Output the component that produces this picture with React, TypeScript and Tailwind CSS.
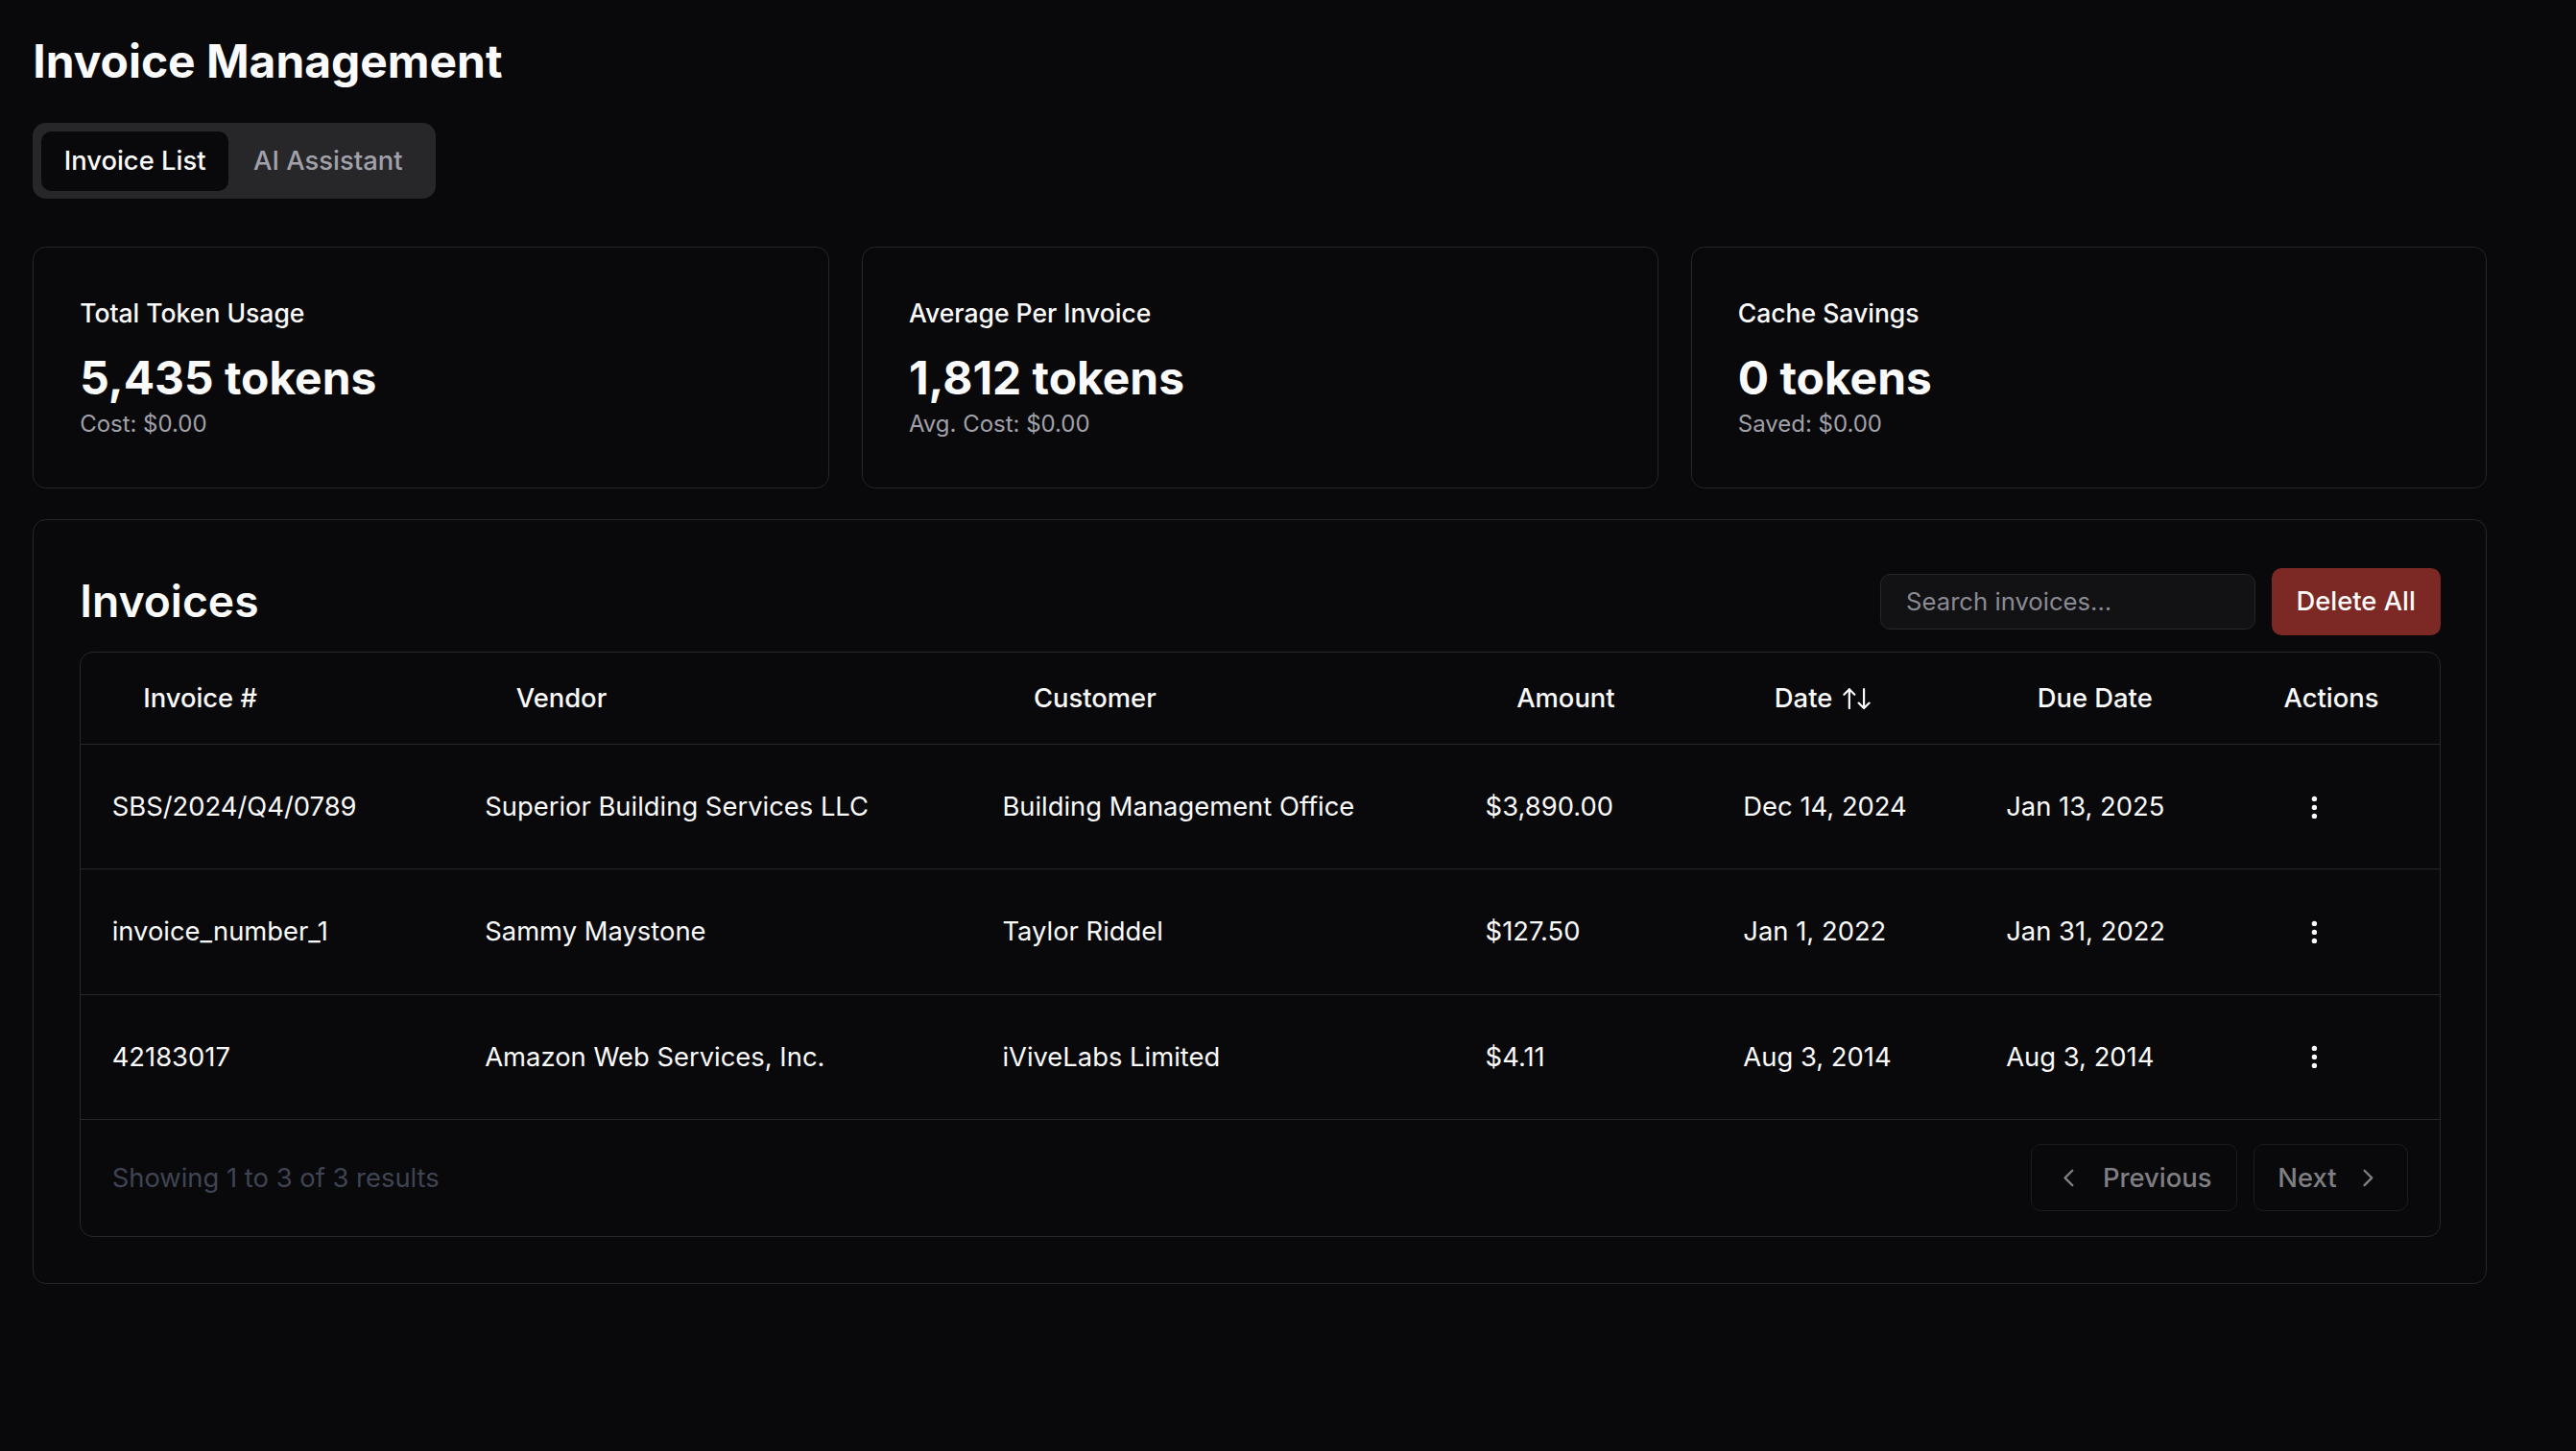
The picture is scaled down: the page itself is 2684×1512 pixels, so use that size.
import { ChevronLeft, ChevronRight, MoreVertical } from "lucide-react";

const rows = [
  {
    id: "SBS/2024/Q4/0789",
    vendor: "Superior Building Services LLC",
    customer: "Building Management Office",
    amount: "$3,890.00",
    date: "Dec 14, 2024",
    due: "Jan 13, 2025",
  },
  {
    id: "invoice_number_1",
    vendor: "Sammy Maystone",
    customer: "Taylor Riddel",
    amount: "$127.50",
    date: "Jan 1, 2022",
    due: "Jan 31, 2022",
  },
  {
    id: "42183017",
    vendor: "Amazon Web Services, Inc.",
    customer: "iViveLabs Limited",
    amount: "$4.11",
    date: "Aug 3, 2014",
    due: "Aug 3, 2014",
  },
];

const stats = [
  { title: "Total Token Usage", value: "5,435 tokens", sub: "Cost: $0.00" },
  { title: "Average Per Invoice", value: "1,812 tokens", sub: "Avg. Cost: $0.00" },
  { title: "Cache Savings", value: "0 tokens", sub: "Saved: $0.00" },
];

function SortIcon() {
  return (
    <svg
      width="17"
      height="13"
      viewBox="0 0 17 13"
      fill="none"
      stroke="currentColor"
      strokeWidth="1.3"
      strokeLinecap="round"
      strokeLinejoin="round"
      className="ml-1.5"
    >
      <path d="M4 12.3V0.7M0.8 3.9L4 0.7L7.2 3.9" />
      <path d="M12.9 0.7V12.3M9.7 9.1L12.9 12.3L16.1 9.1" />
    </svg>
  );
}

export default function App() {
  return (
    <div className="min-h-screen bg-[#09090b] text-[#fafafa] font-['Inter',sans-serif]">
      <div className="[zoom:1.7117]">
        <div className="p-5">
          <div className="max-w-[1494px]">
            <h1 className="text-[28px] leading-9 font-bold">Invoice Management</h1>

            <div className="mt-[19px] inline-flex h-[46px] items-center rounded-lg bg-[#27272a] p-[5px]">
              <div className="flex h-9 items-center rounded-md bg-[#09090b] px-[14px] text-base font-medium text-[#fafafa]">
                Invoice List
              </div>
              <div className="flex h-9 items-center rounded-md px-[15px] text-base font-medium text-[#a1a1aa]">
                AI Assistant
              </div>
            </div>

            <div className="mt-[29px] grid grid-cols-3 gap-5">
              {stats.map((s) => (
                <div
                  key={s.title}
                  className="rounded-lg border border-[#27272a] bg-[#09090b] px-7 pt-[28px] pb-[28px]"
                >
                  <div className="text-[15.5px] leading-6 font-medium">{s.title}</div>
                  <div className="mt-2.5 text-[28px] leading-9 font-bold">{s.value}</div>
                  <div className="text-sm leading-5 text-[#a1a1aa]">{s.sub}</div>
                </div>
              ))}
            </div>

            <div className="mt-[19px] rounded-lg border border-[#27272a] bg-[#09090b] px-7 pt-[29px] pb-7">
              <div className="flex h-[41px] items-center justify-between">
                <h2 className="text-[27px] leading-9 font-semibold">Invoices</h2>
                <div className="flex items-center gap-2.5">
                  <div className="flex h-[34px] w-[228px] items-center rounded-md border border-[#27272a] bg-[#121214] px-[15px] text-[15px] text-[#8a8a93]">
                    Search invoices...
                  </div>
                  <button className="flex h-[41px] items-center rounded-md bg-[#7c2824] px-[15px] text-base font-medium text-[#fafafa]">
                    Delete All
                  </button>
                </div>
              </div>

              <div className="mt-2.5 overflow-hidden rounded-lg border border-[#27272a]">
                <table className="w-full table-fixed border-collapse text-base">
                  <colgroup>
                    <col className="w-[227px]" />
                    <col className="w-[315px]" />
                    <col className="w-[294px]" />
                    <col className="w-[157px]" />
                    <col className="w-[160px]" />
                    <col className="w-[170px]" />
                    <col />
                  </colgroup>
                  <thead>
                    <tr className="h-[56px] border-b border-[#27272a]">
                      <th className="pl-[38px] text-left font-medium">Invoice #</th>
                      <th className="pl-[38px] text-left font-medium">Vendor</th>
                      <th className="pl-[38px] text-left font-medium">Customer</th>
                      <th className="pl-[38px] text-left font-medium">Amount</th>
                      <th className="pl-[38px] text-left font-medium">
                        <span className="flex items-center">
                          Date
                          <SortIcon />
                        </span>
                      </th>
                      <th className="pl-[38px] text-left font-medium">Due Date</th>
                      <th className="pl-[18px] text-left font-medium">Actions</th>
                    </tr>
                  </thead>
                  <tbody>
                    {rows.map((r) => (
                      <tr key={r.id} className="h-[76px] border-b border-[#27272a]">
                        <td className="pl-[19px]">{r.id}</td>
                        <td className="pl-[19px]">{r.vendor}</td>
                        <td className="pl-[19px]">{r.customer}</td>
                        <td className="pl-[19px]">{r.amount}</td>
                        <td className="pl-[19px]">{r.date}</td>
                        <td className="pl-[19px]">{r.due}</td>
                        <td className="pl-[19px]">
                          <button className="flex h-8 w-[35px] items-center justify-center text-[#fafafa]">
                            <MoreVertical size={18} strokeWidth={2.2} />
                          </button>
                        </td>
                      </tr>
                    ))}
                  </tbody>
                </table>
                <div className="flex h-[71px] items-center justify-between pl-[19px] pr-[19px]">
                  <span className="text-base text-[#3f4452]">Showing 1 to 3 of 3 results</span>
                  <div className="flex items-center gap-2.5">
                    <button className="flex h-[41px] items-center rounded-md border border-[#1c1c1f] pl-[13px] pr-[15px] text-base font-medium text-[#7f7f83]">
                      <ChevronLeft size={18} strokeWidth={1.8} />
                      <span className="ml-3">Previous</span>
                    </button>
                    <button className="flex h-[41px] items-center rounded-md border border-[#1c1c1f] pl-[14px] pr-[15px] text-base font-medium text-[#7f7f83]">
                      <span className="mr-2.5">Next</span>
                      <ChevronRight size={18} strokeWidth={1.8} />
                    </button>
                  </div>
                </div>
              </div>
            </div>
          </div>
        </div>
      </div>
    </div>
  );
}
